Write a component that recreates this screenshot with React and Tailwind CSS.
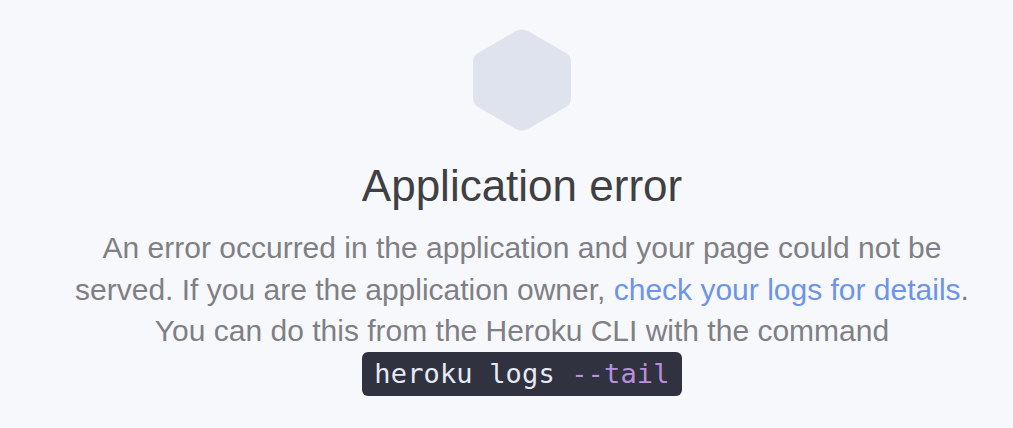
export default function App() {
  return (
    <div className="min-h-screen bg-[#f7f8fb] flex flex-col items-center pt-[29px] pl-[31px] text-center font-['Liberation_Sans',Arial,sans-serif]">
      <svg width="98" height="102" viewBox="0 0 98 102" className="block">
        <path
          d="M43 2 L5 24 Q0 27 0 33 L0 69 Q0 75 5 78 L43 100 Q49 103 55 100 L93 78 Q98 75 98 69 L98 33 Q98 27 93 24 L55 2 Q49 -1 43 2 Z"
          fill="#dfe3ed"
        />
      </svg>
      <h1 className="mt-[29px] text-[44px] leading-[52px] font-normal text-[#3f3f44]">Application error</h1>
      <p className="mt-[15px] w-[960px] text-[30px] leading-[41.5px] text-[#7f7f85]">
        An error occurred in the application and your page could not be
        <br />
        served. If you are the application owner,{" "}
        <a href="#" className="text-[#6c94e8]">check your logs for details</a>.
        <br />
        You can do this from the Heroku CLI with the command
        <br />
        <code className="inline-block h-[44px] w-[320px] rounded-md bg-[#31323f] text-[#e6eaf6] text-[27px] tracking-[0.15px] leading-[44px] font-['DejaVu_Sans_Mono','Liberation_Mono',monospace]">
          heroku logs <span className="text-[#b78fdc]">--tail</span>
        </code>
      </p>
    </div>
  );
}
